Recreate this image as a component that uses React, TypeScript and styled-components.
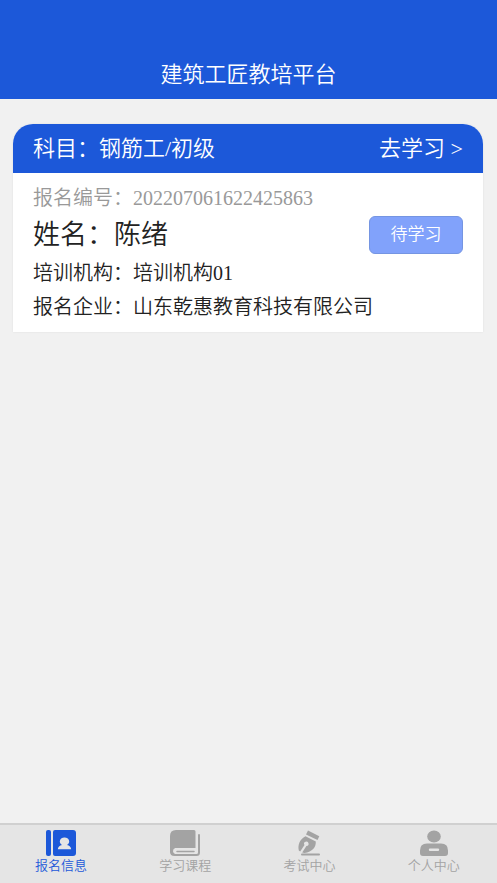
import React from "react";
import styled, { createGlobalStyle } from "styled-components";

const GlobalStyle = createGlobalStyle`
  * { box-sizing: border-box; }
  body {
    margin: 0;
    background: #f1f1f1;
    color: #222;
    font-family: "Liberation Serif", "Noto Sans CJK SC", serif;
    font-weight: 350;
  }
  button { font-family: inherit; font-weight: inherit; cursor: pointer; }
`;

const Page = styled.div`
  min-height: 100vh;
  display: flex;
  flex-direction: column;
`;

const Header = styled.header`
  padding: 60px 16px 9px;
  background: #1c58d9;
  color: #fff;
  text-align: center;
`;

const Title = styled.h1`
  margin: 0;
  font-size: 22px;
  line-height: 30px;
  font-weight: inherit;
`;

const Content = styled.main`
  flex: 1;
  padding: 25px 14px 25px 13px;
`;

const Card = styled.article`
  overflow: hidden;
  border-radius: 20px 20px 0 0;
  background: #fff;
  box-shadow: 0 0 2px #ddd;
`;

const CardHeader = styled.div`
  display: flex;
  justify-content: space-between;
  align-items: center;
  height: 49px;
  padding: 0 20px;
  background: #1c58d9;
  color: #fff;
`;

const Subject = styled.h2`
  margin: 0;
  font-size: 22px;
  line-height: 30px;
  font-weight: inherit;
`;

const StudyLink = styled.a`
  color: inherit;
  font-size: 22px;
  line-height: 30px;
  text-decoration: none;
`;

const CardBody = styled.div`
  padding: 9px 20px 8px;
`;

const Row = styled.p<{ $muted?: boolean }>`
  margin: 0;
  font-size: 20px;
  line-height: 34px;
  color: ${(p) => (p.$muted ? "#999" : "#222")};
`;

const NumberRow = styled(Row)`
  line-height: 32px;
`;

const NameRow = styled.div`
  display: flex;
  justify-content: space-between;
  align-items: center;
  height: 42px;
`;

const Name = styled.p`
  margin: 0;
  font-size: 27px;
  line-height: 38px;
`;

const StatusButton = styled.button`
  width: 94px;
  height: 38px;
  padding: 0 0 6px;
  border: 1px solid #7595e2;
  border-radius: 6px;
  background: #81a2fb;
  color: #fff;
  font-size: 17px;
`;

const TabBar = styled.nav`
  display: grid;
  grid-template-columns: repeat(4, 1fr);
  height: 60px;
  border-top: 2px solid #d0d0d0;
  background: #e5e5e5;
`;

const Tab = styled.button<{ $active?: boolean }>`
  display: flex;
  flex-direction: column;
  align-items: center;
  padding: 4px 2px 0 0;
  border: 0;
  background: none;
  color: ${(p) => (p.$active ? "#1c58d9" : "#a3a3a3")};
  font-size: 13px;
  line-height: 18px;
`;

const Icon = styled.svg`
  width: 30px;
  height: 28px;
  fill: currentColor;
`;

const icons = {
  info: (
    <>
      <rect x="0" y="1" width="5" height="26" rx="2" />
      <path
        fillRule="evenodd"
        d="M9 1h18a3 3 0 0 1 3 3v20a3 3 0 0 1-3 3H9a2 2 0 0 1-2-2V3a2 2 0 0 1 2-2ZM18.500 8.500a4.500 4 0 0 0-2.500 7.400c-2.500.6-4 2-4.200 4.300h13.400c-.2-2.300-1.700-3.700-4.200-4.300a4.500 4 0 0 0-2.500-7.400Z"
      />
    </>
  ),
  course: (
    <>
      <path d="M6 1h18a1.500 1.500 0 0 1 1.500 1.500v16.500H5q-3 0-5 3V7q0-6 6-6Z" />
      <path
        d="M29 6v17.500q0 2.500-2.500 2.500H4.500Q1 26 1 22.800"
        fill="none"
        stroke="currentColor"
        strokeWidth="2"
        strokeLinecap="round"
      />
      <path d="M0 23V19h5q-2 1-2 3.200 0 1.800 2 2.800H2Z" />
      <path
        d="M7 22.500h17"
        stroke="currentColor"
        strokeWidth="1.500"
        strokeLinecap="round"
      />
    </>
  ),
  exam: (
    <>
      <path d="M13 1.500 24.300 7.200l-1.800 3.800L11 5.400Z" />
      <path
        fillRule="evenodd"
        d="M10.500 7.200 20.800 12.400c.2 6.200-3.300 9.900-11.300 11.700l-2.300-.7 4.200-6.400a2.200 2.200 0 1 0-1.900-1L5.200 22.500 3.800 21.500C2.600 15.500 4.800 10.200 10.500 7.200Z"
      />
      <rect x="6" y="24.500" width="19" height="2" rx="1" />
    </>
  ),
  profile: (
    <>
      <ellipse cx="15" cy="7.500" rx="6.800" ry="6" />
      <path
        fillRule="evenodd"
        d="M8 14.500h14q7 0 7 7V24q0 3-3 3H4q-3 0-3-3v-2.500q0-7 7-7ZM11 19.500a1.200 1.200 0 0 0 0 2.400h8a1.200 1.200 0 0 0 0-2.400Z"
      />
    </>
  ),
};

const tabs: { label: string; icon: keyof typeof icons }[] = [
  { label: "报名信息", icon: "info" },
  { label: "学习课程", icon: "course" },
  { label: "考试中心", icon: "exam" },
  { label: "个人中心", icon: "profile" },
];

export default function App() {
  return (
    <Page lang="zh-CN">
      <GlobalStyle />
      <Header>
        <Title>建筑工匠教培平台</Title>
      </Header>
      <Content>
        <Card>
          <CardHeader>
            <Subject>科目：钢筋工/初级</Subject>
            <StudyLink href="#study">去学习 &gt;</StudyLink>
          </CardHeader>
          <CardBody>
            <NumberRow $muted>报名编号：202207061622425863</NumberRow>
            <NameRow>
              <Name>姓名：陈绪</Name>
              <StatusButton type="button">待学习</StatusButton>
            </NameRow>
            <Row>培训机构：培训机构01</Row>
            <Row>报名企业：山东乾惠教育科技有限公司</Row>
          </CardBody>
        </Card>
      </Content>
      <TabBar>
        {tabs.map((tab, i) => (
          <Tab
            key={tab.icon}
            type="button"
            $active={i === 0}
            aria-current={i === 0 ? "page" : undefined}
          >
            <Icon viewBox="0 0 30 28" aria-hidden="true">
              {icons[tab.icon]}
            </Icon>
            {tab.label}
          </Tab>
        ))}
      </TabBar>
    </Page>
  );
}
